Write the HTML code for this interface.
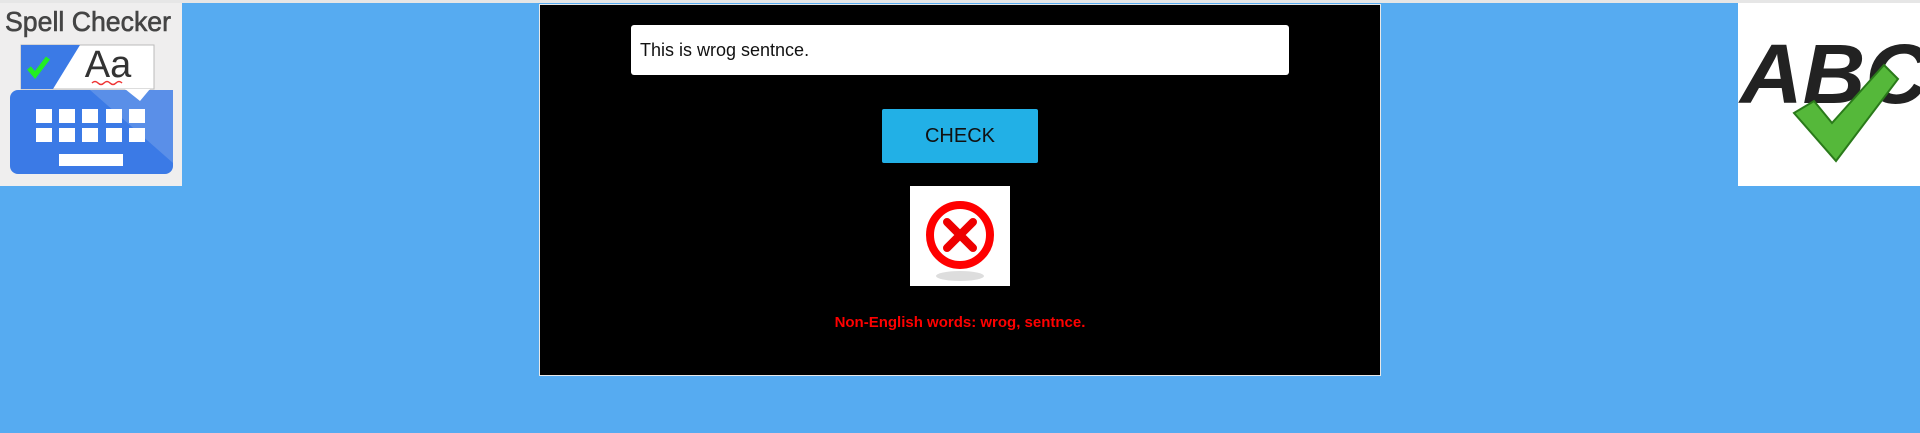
<!DOCTYPE html>
<html><head><style>
html,body{margin:0;padding:0;width:1920px;height:433px;overflow:hidden;background:#56abf1;font-family:"Liberation Sans",sans-serif}
.top{position:absolute;left:0;top:0;width:1920px;height:3px;background:#e6e6e6}
.panel{position:absolute;left:539px;top:4px;width:842px;height:372px;background:#000;border:1px solid #e8e8e8;box-sizing:border-box}
.inp{position:absolute;left:631px;top:25px;width:658px;height:50px;background:#fff;border-radius:3px;font-size:18px;line-height:50px;padding-left:9px;box-sizing:border-box;color:#111}
.btn{position:absolute;left:882px;top:109px;width:156px;height:54px;background:#22b0e6;border-radius:2px;text-align:center;line-height:54px;font-size:20px;color:#111}
.img{position:absolute;left:910px;top:186px;width:100px;height:100px;background:#fff}
.msg{position:absolute;left:539px;width:842px;top:314px;text-align:center;color:#f00;font-weight:bold;font-size:15px}
</style></head><body>
<div class="top"></div>
<div style="position:absolute;left:0;top:3px;width:182px;height:183px;background:#efeeee">
<svg width="182" height="183" viewBox="0 0 182 183">
<text x="88" y="28" text-anchor="middle" font-family="Liberation Sans" font-size="28" fill="#444" stroke="#444" stroke-width="0.6" textLength="166" lengthAdjust="spacingAndGlyphs">Spell Checker</text>
<rect x="10" y="87" width="163" height="84" rx="8" fill="#3b7ae6"/>
<path d="M90 87 L173 87 L173 160 Z" fill="#5a8fe8"/>
<rect x="21" y="42" width="133" height="44" fill="#fff" stroke="#bbb"/>
<path d="M21 42 L80 42 L53 86 L21 86 Z" fill="#3b7ae6"/>
<path d="M125 86 L140 98 L150 86 Z" fill="#fff"/>
<path d="M29 65 L35 72 L48 55" stroke="#2e2" stroke-width="5" fill="none"/>
<text x="108" y="74" text-anchor="middle" font-size="38" fill="#333">Aa</text>
<path d="M92 80 q3 -3 6 0 t6 0 t6 0 t6 0 t6 0" stroke="#e33" stroke-width="1.5" fill="none"/>
<g fill="#fff">
<rect x="36" y="106" width="16" height="14"/><rect x="59" y="106" width="16" height="14"/><rect x="82" y="106" width="16" height="14"/><rect x="106" y="106" width="16" height="14"/><rect x="129" y="106" width="16" height="14"/>
<rect x="36" y="125" width="16" height="14"/><rect x="59" y="125" width="16" height="14"/><rect x="82" y="125" width="16" height="14"/><rect x="106" y="125" width="16" height="14"/><rect x="129" y="125" width="16" height="14"/>
<rect x="59" y="151" width="64" height="12"/></g>
</svg></div>
<div style="position:absolute;left:1738px;top:3px;width:182px;height:183px;background:#fff;overflow:hidden">
<svg width="182" height="183">
<text x="2" y="100" font-family="Liberation Sans" font-weight="bold" font-style="italic" font-size="84" fill="#222" textLength="188" lengthAdjust="spacingAndGlyphs">ABC</text>
<path d="M56 110 L76 98 L94 120 L146 62 L160 76 L98 158 Z" fill="#55b83a" stroke="#2a7a1a" stroke-width="2"/>
</svg></div>
<div class="panel"></div>
<div class="inp">This is wrog sentnce.</div>
<div class="btn">CHECK</div>
<div class="img"><svg width="100" height="100"><ellipse cx="50" cy="90" rx="24" ry="5" fill="#ddd"/><circle cx="50" cy="49" r="30" fill="none" stroke="#f00" stroke-width="8"/><path d="M37 36 L63 62 M63 36 L37 62" stroke="#e00" stroke-width="8" stroke-linecap="round"/></svg></div>
<div class="msg">Non-English words: wrog, sentnce.</div>
</body></html>
